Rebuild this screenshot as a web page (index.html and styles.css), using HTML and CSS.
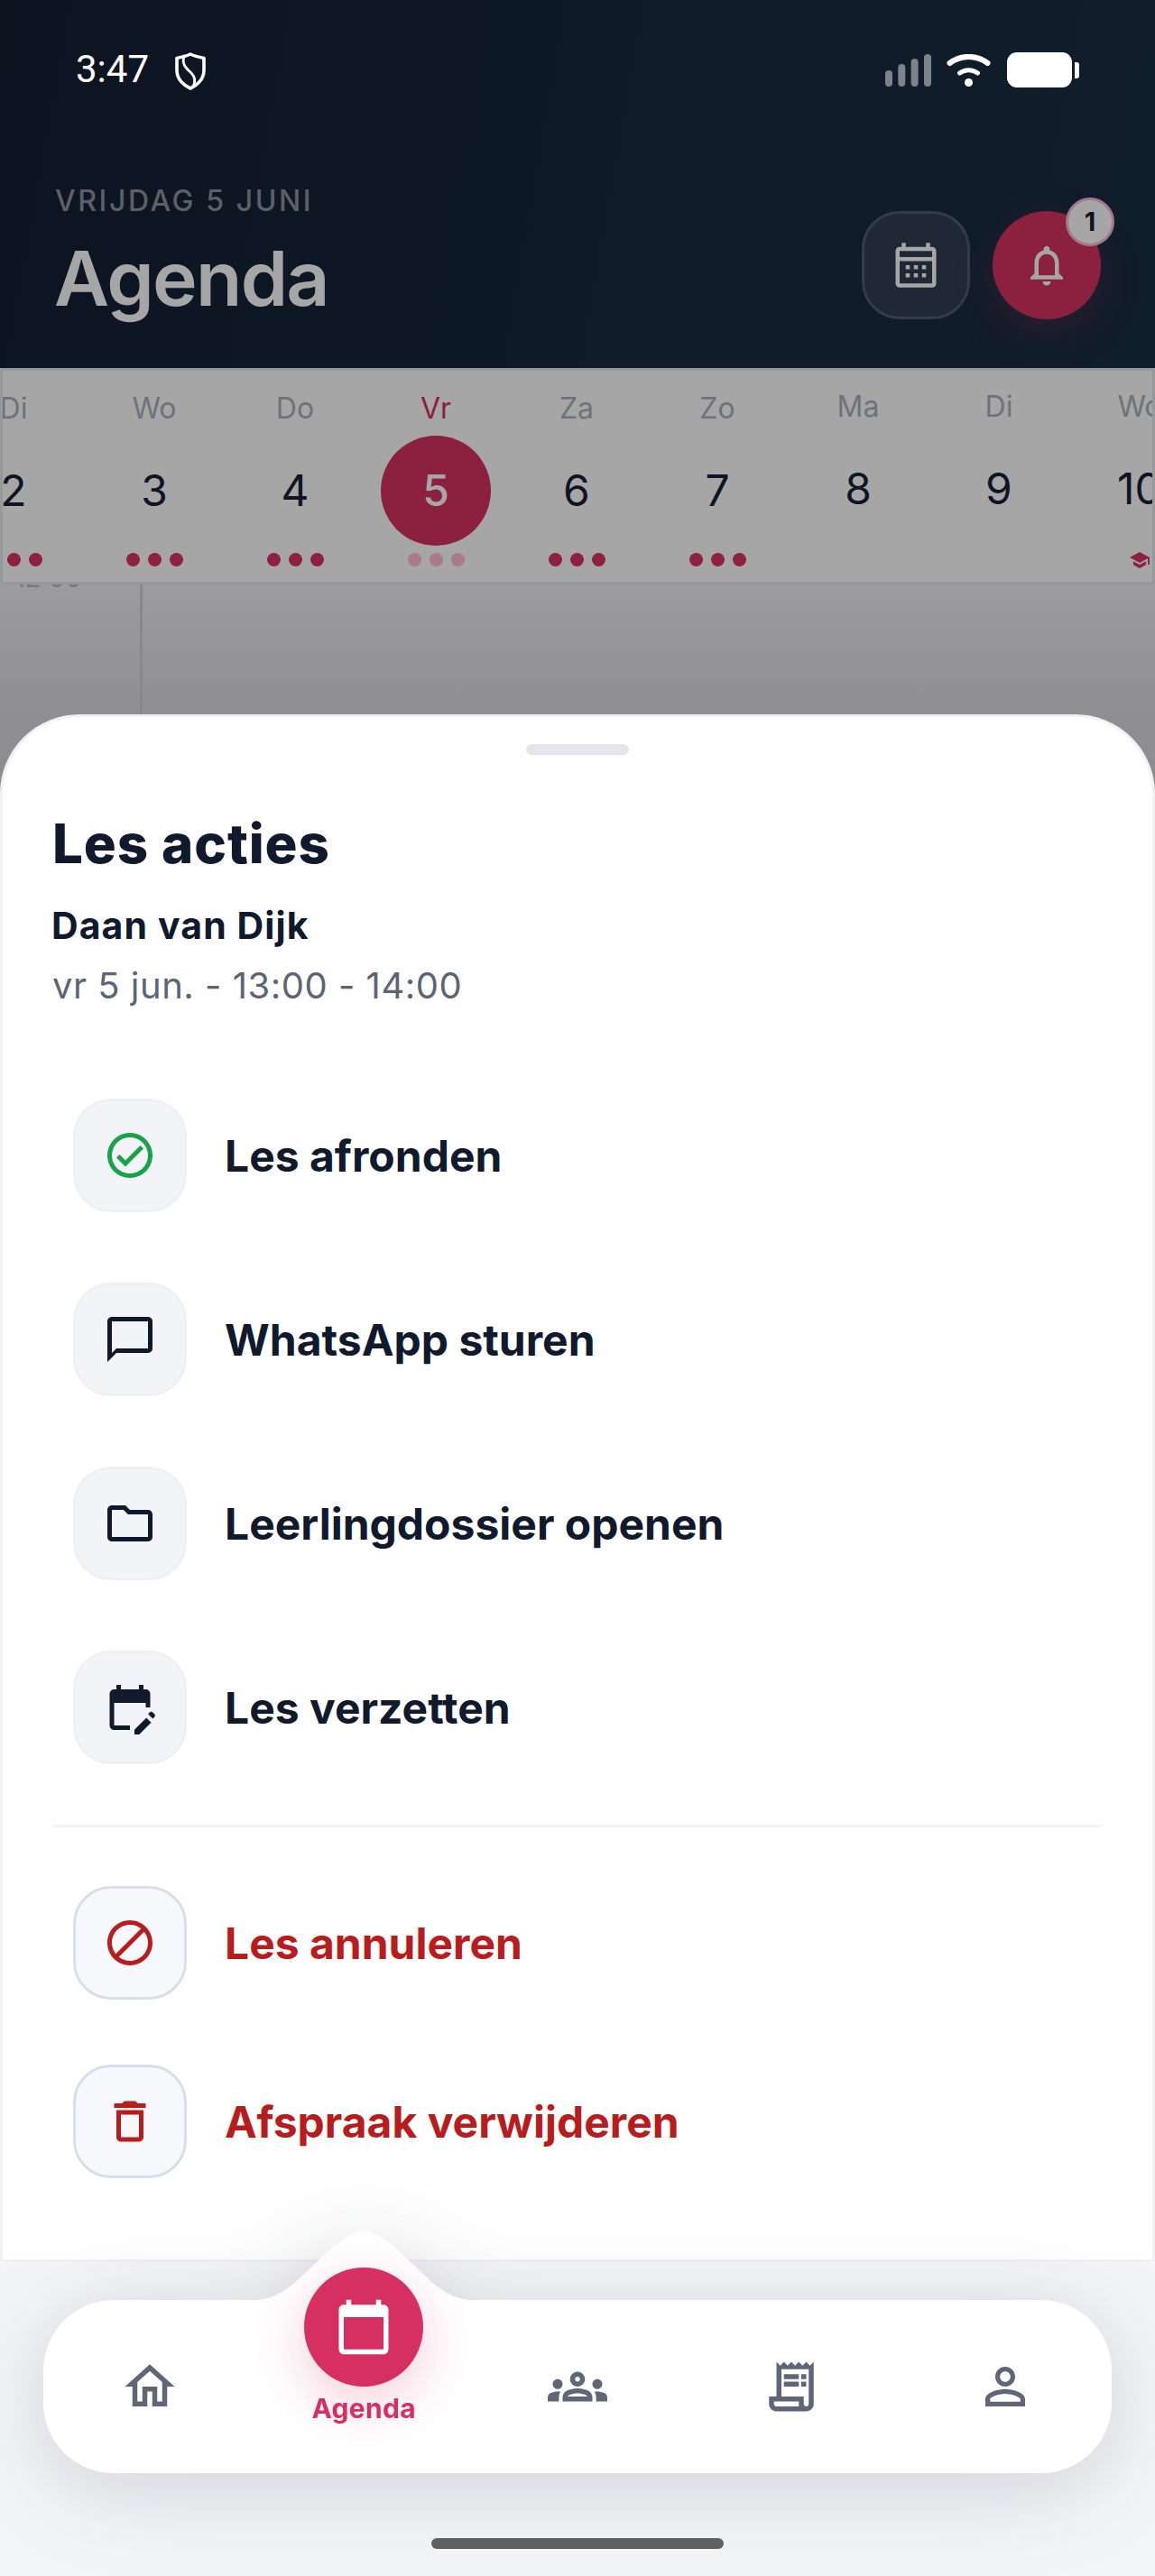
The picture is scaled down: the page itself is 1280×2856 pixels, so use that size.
FILE: index.html
```html
<!DOCTYPE html>
<html lang="nl">
<head>
<meta charset="utf-8">
<title>Agenda</title>
<link rel="stylesheet" href="styles.css">
</head>
<body>
<div class="screen">
  <header class="header">
    <div class="status">
      <span class="time">3:47</span>
      <svg class="shield" viewBox="0 0 34 42" fill="none" stroke="#fff" stroke-width="3.6" stroke-linejoin="round" stroke-linecap="round"><path d="M17 2C22 4.500 27 5.500 32 6.500V20C32 30 24 37 17 40C10 37 2 30 2 20V6.500C7 5.500 12 4.500 17 2Z"/><path d="M10 4C7 14 13 18 18 23C22 27 23 32 20 38" stroke-width="2.800"/></svg>
      <div class="status-right">
        <svg class="signal" viewBox="0 0 51 36" fill="#7c8389"><rect x="0" y="18" width="8" height="18" rx="4"/><rect x="14.300" y="11" width="8" height="25" rx="4"/><rect x="28.600" y="5" width="8" height="31" rx="4"/><rect x="43" y="0" width="8" height="36" rx="4"/></svg>
        <svg class="wifi" viewBox="0 0 49 36" fill="none" stroke="#fff" stroke-width="6" stroke-linecap="round"><path d="M3.500 10C16 .5 33 .5 45.500 10"/><path d="M14.500 21C20.500 16.500 28.500 16.500 34.500 21" stroke-width="5"/><circle cx="24.500" cy="31.500" r="4.500" fill="#fff" stroke="none"/></svg>
        <div class="battery"><span class="battery-body"></span><span class="battery-nub"></span></div>
      </div>
    </div>
    <div class="title-row">
      <div class="titles">
        <div class="eyebrow">VRIJDAG 5 JUNI</div>
        <h1 class="page-title">Agenda</h1>
      </div>
      <div class="actions">
        <button class="btn-cal" type="button"><svg class="i54" viewBox="0 0 24 24" fill="#a6a6a6"><path d="M20 3h-1V1h-2v2H7V1H5v2H4c-1.100 0-2 .9-2 2v16c0 1.100.9 2 2 2h16c1.100 0 2-.9 2-2V5c0-1.100-.9-2-2-2zm0 18H4V10h16v11zm0-13H4V5h16v3z"/><path d="M9 14H7v-2h2v2zm4 0h-2v-2h2v2zm4 0h-2v-2h2v2zm-8 4H7v-2h2v2zm4 0h-2v-2h2v2zm4 0h-2v-2h2v2z"/></svg></button>
        <button class="btn-bell" type="button"><svg class="i54" viewBox="0 0 24 24" fill="#a6a6a6"><path d="M12 22c1.100 0 2-.9 2-2h-4c0 1.100.9 2 2 2zm6-6v-5c0-3.070-1.630-5.640-4.500-6.320V4c0-.83-.67-1.500-1.500-1.500s-1.500.67-1.500 1.500v.68C7.640 5.360 6 7.920 6 11v5l-2 2v1h16v-1l-2-2zm-2 1H8v-6c0-2.480 1.510-4.500 4-4.500s4 2.020 4 4.500v6z"/></svg><span class="badge">1</span></button>
      </div>
    </div>
  </header>

  <section class="strip">
    <div class="days">
      <div class="day"><span class="d-label">Di</span><span class="d-num">2</span><span class="dots"><i></i><i></i><i></i></span></div>
      <div class="day"><span class="d-label">Wo</span><span class="d-num">3</span><span class="dots"><i></i><i></i><i></i></span></div>
      <div class="day"><span class="d-label">Do</span><span class="d-num">4</span><span class="dots"><i></i><i></i><i></i></span></div>
      <div class="day today"><span class="d-label">Vr</span><span class="d-num">5</span><span class="dots"><i></i><i></i><i></i></span></div>
      <div class="day"><span class="d-label">Za</span><span class="d-num">6</span><span class="dots"><i></i><i></i><i></i></span></div>
      <div class="day"><span class="d-label">Zo</span><span class="d-num">7</span><span class="dots"><i></i><i></i><i></i></span></div>
      <div class="day raised"><span class="d-label">Ma</span><span class="d-num">8</span></div>
      <div class="day raised"><span class="d-label">Di</span><span class="d-num">9</span></div>
      <div class="day raised"><span class="d-label">Wo</span><span class="d-num">10</span><span class="dots"><svg class="cap" viewBox="0 0 24 24" fill="#8e2040"><path d="M5 13.180v4L12 21l7-3.820v-4L12 17l-7-3.820zM12 3L1 9l11 6 9-4.910V17h2V9L12 3z"/></svg></span></div>
    </div>
  </section>

  <section class="timeline">
    <div class="rail"><span class="rail-time">12:00</span></div>
  </section>

  <section class="sheet">
    <div class="handle"></div>
    <h2 class="sheet-title">Les acties</h2>
    <div class="student">Daan van Dijk</div>
    <div class="when">vr 5 jun. - 13:00 - 14:00</div>

    <div class="list">
      <div class="row">
        <span class="ico"><svg class="i60" viewBox="0 0 24 24" fill="#16a34a"><path d="M12 2C6.480 2 2 6.480 2 12s4.480 10 10 10 10-4.480 10-10S17.520 2 12 2zm0 18c-4.410 0-8-3.590-8-8s3.590-8 8-8 8 3.590 8 8-3.590 8-8 8zm4.590-12.420L10 14.170l-2.590-2.580L6 13l4 4 8-8z"/></svg></span>
        <span class="row-label">Les afronden</span>
      </div>
      <div class="row">
        <span class="ico"><svg class="i60" viewBox="0 0 24 24" fill="#111a2c"><path d="M20 2H4c-1.100 0-2 .9-2 2v18l4-4h14c1.100 0 2-.9 2-2V4c0-1.100-.9-2-2-2zm0 14H6l-2 2V4h16v12z"/></svg></span>
        <span class="row-label">WhatsApp sturen</span>
      </div>
      <div class="row">
        <span class="ico"><svg class="i60" viewBox="0 0 24 24" fill="#111a2c"><path d="M9.170 6l2 2H20v10H4V6h5.170M10 4H4c-1.100 0-1.990.9-1.990 2L2 18c0 1.100.9 2 2 2h16c1.100 0 2-.9 2-2V8c0-1.100-.9-2-2-2h-8l-2-2z"/></svg></span>
        <span class="row-label">Leerlingdossier openen</span>
      </div>
      <div class="row">
        <span class="ico"><svg class="i60" viewBox="0 0 24 24" fill="#111a2c"><path d="M5 10h14v2h2V6c0-1.100-.9-2-2-2h-1V2h-2v2H8V2H6v2H5C3.900 4 3 4.900 3 6v14c0 1.100.9 2 2 2h7v-2H5V10z"/><path d="M22.840 16.280l-.71.71-2.120-2.120.71-.71c.39-.39 1.020-.39 1.410 0l.71.71c.39.39.39 1.020 0 1.410zM14 21.870V24h2.120l5.300-5.300-2.120-2.120L14 21.870z"/></svg></span>
        <span class="row-label">Les verzetten</span>
      </div>
    </div>

    <div class="divider"></div>

    <div class="list danger">
      <div class="row">
        <span class="ico"><svg class="i60" viewBox="0 0 24 24" fill="#b91c1c"><path d="M12 2C6.480 2 2 6.480 2 12s4.480 10 10 10 10-4.480 10-10S17.520 2 12 2zM4 12c0-4.420 3.580-8 8-8 1.850 0 3.550.63 4.900 1.690L5.690 16.900C4.630 15.550 4 13.850 4 12zm8 8c-1.850 0-3.550-.63-4.900-1.690L18.310 7.100C19.370 8.450 20 10.150 20 12c0 4.420-3.580 8-8 8z"/></svg></span>
        <span class="row-label">Les annuleren</span>
      </div>
      <div class="row">
        <span class="ico"><svg class="i60" viewBox="0 0 24 24" fill="#b91c1c"><path d="M6 19c0 1.100.9 2 2 2h8c1.100 0 2-.9 2-2V7H6v12zM8 9h8v10H8V9zm7.500-5l-1-1h-5l-1 1H5v2h14V4h-3.500z"/></svg></span>
        <span class="row-label">Afspraak verwijderen</span>
      </div>
    </div>
  </section>

  <footer class="footer">
    <nav class="nav">
      <svg class="tip" viewBox="0 0 242 80" fill="#fff"><path d="M0 78C30 78 48 55 70 35C88 17 104 4 121 0C138 4 154 17 172 35C194 55 212 78 242 78V80H0Z"/></svg>
      <div class="tab"><svg class="i66" viewBox="0 0 24 24" fill="#5f6776"><path d="M12 5.690l5 4.500V18h-2v-6H9v6H7v-7.810l5-4.500M12 3L2 12h3v8h6v-6h2v6h6v-8h3L12 3z"/></svg></div>
      <div class="tab active">
        <span class="fab"><svg class="i66" viewBox="0 0 24 24" fill="#fff"><path d="M20 3h-1V1h-2v2H7V1H5v2H4c-1.100 0-2 .9-2 2v16c0 1.100.9 2 2 2h16c1.100 0 2-.9 2-2V5c0-1.100-.9-2-2-2zm0 18H4V8h16v13z"/></svg></span>
        <span class="tab-label">Agenda</span>
      </div>
      <div class="tab"><svg class="i66" viewBox="0 0 24 24" fill="#5f6776"><path d="M4 13c1.100 0 2-.9 2-2 0-1.100-.9-2-2-2s-2 .9-2 2c0 1.100.9 2 2 2zm1.130 1.100C4.760 14.040 4.390 14 4 14c-.99 0-1.930.21-2.780.58C.48 14.900 0 15.620 0 16.430V18h4.500v-1.610c0-.83.23-1.610.63-2.290zM20 13c1.100 0 2-.9 2-2 0-1.100-.9-2-2-2s-2 .9-2 2c0 1.100.9 2 2 2zm4 3.430c0-.81-.48-1.530-1.220-1.850C21.930 14.210 20.990 14 20 14c-.39 0-.76.04-1.130.1.4.68.63 1.460.63 2.290V18H24v-1.570zm-7.760-2.780c-1.170-.52-2.610-.9-4.240-.9s-3.070.39-4.240.9C6.680 14.130 6 15.210 6 16.390V18h12v-1.610c0-1.180-.68-2.260-1.760-2.740zM8.070 16c.09-.23.13-.39.91-.69.97-.38 1.990-.56 3.020-.56s2.050.18 3.020.56c.77.3.81.46.91.69H8.070zM12 8c.55 0 1 .45 1 1s-.45 1-1 1-1-.45-1-1 .45-1 1-1m0-2c-1.660 0-3 1.340-3 3s1.340 3 3 3 3-1.340 3-3-1.340-3-3-3z"/></svg></div>
      <div class="tab"><svg class="i66" viewBox="0 0 24 24" fill="#5f6776"><path d="M19.500 3.500L18 2l-1.500 1.500L15 2l-1.500 1.500L12 2l-1.500 1.500L9 2 7.500 3.500 6 2v14H3v3c0 1.660 1.340 3 3 3h12c1.660 0 3-1.340 3-3V2l-1.500 1.500zM15 20H6c-.55 0-1-.45-1-1v-1h10v2zm4-1c0 .55-.45 1-1 1s-1-.45-1-1v-3H8V5h11v14z"/><path d="M9 7h6v2H9zM16 7h2v2h-2zM9 10h6v2H9zM16 10h2v2h-2z"/></svg></div>
      <div class="tab"><svg class="i66" viewBox="0 0 24 24" fill="#5f6776"><path d="M12 5.900c1.160 0 2.100.94 2.100 2.100s-.94 2.100-2.100 2.100S9.900 9.160 9.900 8s.94-2.100 2.100-2.100m0 9c2.970 0 6.100 1.460 6.100 2.100v1.100H5.900V17c0-.64 3.130-2.100 6.100-2.100M12 4C9.790 4 8 5.790 8 8s1.790 4 4 4 4-1.790 4-4-1.790-4-4-4zm0 9c-2.670 0-8 1.340-8 4v3h16v-3c0-2.660-5.330-4-8-4z"/></svg></div>
    </nav>
    <div class="home-bar"></div>
  </footer>
</div>
</body>
</html>
```

FILE: styles.css
```css
* { box-sizing: border-box; }
html, body { margin: 0; padding: 0; }
body { font-family: "Inter", "Liberation Sans", sans-serif; background: #f4f5f8; }
h1, h2 { margin: 0; }
i { display: block; }
button { padding: 0; font: inherit; cursor: pointer; }
svg { display: block; flex: none; }

.screen {
  position: relative;
  width: 1280px;
  height: 2856px;
  overflow: hidden;
  display: flex;
  flex-direction: column;
  background: #f4f5f8;
}

/* Header */
.header {
  height: 408px;
  flex: none;
  background: linear-gradient(100deg, #0c1420 0%, #0f1b28 60%, #101d2b 100%);
}
.status {
  height: 202px;
  display: flex;
  align-items: flex-start;
  padding: 57px 84px 0 84px;
}
.time {
  font-family: "Roboto", sans-serif;
  font-size: 42px;
  line-height: 40px;
  color: #fff;
}
.shield { width: 34px; height: 42px; margin: 1px 0 0 29px; }
.status-right { margin-left: auto; display: flex; align-items: flex-start; padding-top: 1px; }
.signal { width: 51px; height: 36px; margin-top: 2px; }
.wifi { width: 49px; height: 36px; margin: 2px 0 0 17px; }
.battery { display: flex; align-items: center; margin-left: 18px; }
.battery-body { display: block; width: 72px; height: 39px; border-radius: 11px; background: #fff; }
.battery-nub { display: block; width: 5px; height: 18px; margin-left: 3px; border-radius: 0 3px 3px 0; background: #fff; }

.title-row { display: flex; justify-content: space-between; padding: 0 60px 0 61px; }
.eyebrow {
  font-size: 32px;
  line-height: 41px;
  font-weight: 500;
  letter-spacing: 2.6px;
  color: #5d6067;
}
.page-title {
  margin: 16px 0 0 -1px;
  font-size: 84px;
  line-height: 100px;
  font-weight: 600;
  letter-spacing: -1.7px;
  color: #a6a6a6;
}
.actions { display: flex; gap: 25px; padding-top: 32px; }
.btn-cal, .btn-bell { width: 120px; height: 120px; display: flex; align-items: center; justify-content: center; }
.btn-cal { background: #1f2935; border: 3px solid #333c47; border-radius: 42px; }
.btn-bell {
  position: relative;
  border: 0;
  border-radius: 50%;
  background: #8b203f;
  box-shadow: 0 15px 45px rgba(139, 32, 63, .22);
}
.i54 { width: 54px; height: 54px; }
.badge {
  position: absolute;
  top: -15px;
  right: -15px;
  width: 54px;
  height: 54px;
  border-radius: 50%;
  border: 3px solid #a27a8a;
  background: #a6a6a6;
  color: #0d1420;
  font-size: 29px;
  font-weight: 700;
  line-height: 48px;
  text-align: center;
}

/* Week strip */
.strip {
  position: relative;
  z-index: 1;
  height: 240px;
  flex: none;
  overflow: hidden;
  border: 3px solid #97989a;
  background: #a6a6a6;
}
.days { display: flex; margin-left: -66px; }
.day { width: 156px; flex: none; display: flex; flex-direction: column; align-items: center; padding-top: 23px; }
.day.raised { padding-top: 21px; }
.d-label { font-size: 32px; line-height: 38px; color: #6d727b; }
.d-num {
  width: 122px;
  height: 122px;
  margin-top: 11px;
  padding-bottom: 2px;
  display: flex;
  align-items: center;
  justify-content: center;
  border-radius: 50%;
  font-size: 48px;
  color: #0f1523;
}
.dots { display: flex; gap: 9px; margin-top: 8px; height: 15px; align-items: center; }
.dots i { width: 15px; height: 15px; flex: none; border-radius: 50%; background: #8e2040; }
.cap { width: 24px; height: 24px; margin-top: 5px; }
.today .d-label { color: #8b203f; }
.today .d-num { background: #8b203f; color: #a6a6a6; font-weight: 500; }
.today .dots i { background: #a87a8a; }

/* Dimmed timeline: runs on behind the sheet's rounded corners */
.timeline {
  height: 234px;
  margin-bottom: -90px;
  flex: none;
  background: linear-gradient(180deg, #9c9c9e 0%, #8f8f93 62%, #8c8c90 100%);
}
.rail { width: 158px; height: 100%; border-right: 3px solid #87888c; padding-left: 16px; }
.rail-time { display: block; margin-top: -24px; font-size: 29px; line-height: 34px; color: #77787c; }

/* Sheet */
.sheet {
  position: relative;
  z-index: 1;
  height: 1716px;
  flex: none;
  padding: 0 55px;
  background: #fff;
  border: 3px solid #f0f1f5;
  border-radius: 88px 88px 0 0;
  display: flex;
  flex-direction: column;
}
.handle { width: 114px; height: 12px; margin: 30px auto 0; border-radius: 6px; background: #e3e6ea; }
.sheet-title { margin: 62px 0 0 0; font-size: 60px; line-height: 72px; font-weight: 800; letter-spacing: .9px; color: #111a2c; }
.student { margin-top: 30px; margin-left: -1px; font-size: 41px; line-height: 50px; font-weight: 700; letter-spacing: 1.1px; color: #111a2c; }
.when { margin-top: 18px; font-size: 40px; line-height: 48px; letter-spacing: .5px; color: #5c6575; }
.list { display: flex; flex-direction: column; gap: 78px; padding-left: 23px; margin-top: 101px; }
.row { display: flex; align-items: center; gap: 42px; }
.ico {
  width: 126px;
  height: 126px;
  flex: none;
  display: flex;
  align-items: center;
  justify-content: center;
  border-radius: 42px;
  background: #f3f4f8;
  border: 3px solid #eff0f4;
}
.i60 { width: 60px; height: 60px; }
.row-label { padding-top: 2px; font-size: 48px; line-height: 60px; font-weight: 700; color: #111a2c; }
.divider { height: 3px; margin-top: 67px; background: #f3f4f6; }
.danger { margin-top: 65px; gap: 72px; }
.danger .ico { background: #f7f8fb; border-color: #d8deea; }
.danger .row-label { color: #b91c1c; }

/* Footer */
.footer { flex: 1; position: relative; z-index: 2; padding: 42px 48px 0; }
.nav {
  position: relative;
  height: 192px;
  display: grid;
  grid-template-columns: repeat(5, 1fr);
  align-items: center;
  background: #fff;
  border-radius: 78px;
  filter: drop-shadow(0 16px 50px rgba(20, 25, 50, .16));
}
.tip { position: absolute; left: 234px; top: -78px; width: 242px; height: 80px; }
.tab { position: relative; display: flex; flex-direction: column; align-items: center; justify-content: center; }
.i66 { width: 66px; height: 66px; }
.tab.active { align-self: start; margin-top: -36px; }
.fab {
  width: 132px;
  height: 132px;
  display: flex;
  align-items: center;
  justify-content: center;
  border-radius: 50%;
  background: #d63062;
  box-shadow: 0 18px 60px rgba(214, 48, 98, .24);
}
.tab-label { margin-top: 6px; font-size: 30px; line-height: 36px; font-weight: 700; letter-spacing: .3px; color: #d63062; }
.home-bar { width: 324px; height: 12px; margin: 72px auto 0; border-radius: 6px; background: #626262; }
```
